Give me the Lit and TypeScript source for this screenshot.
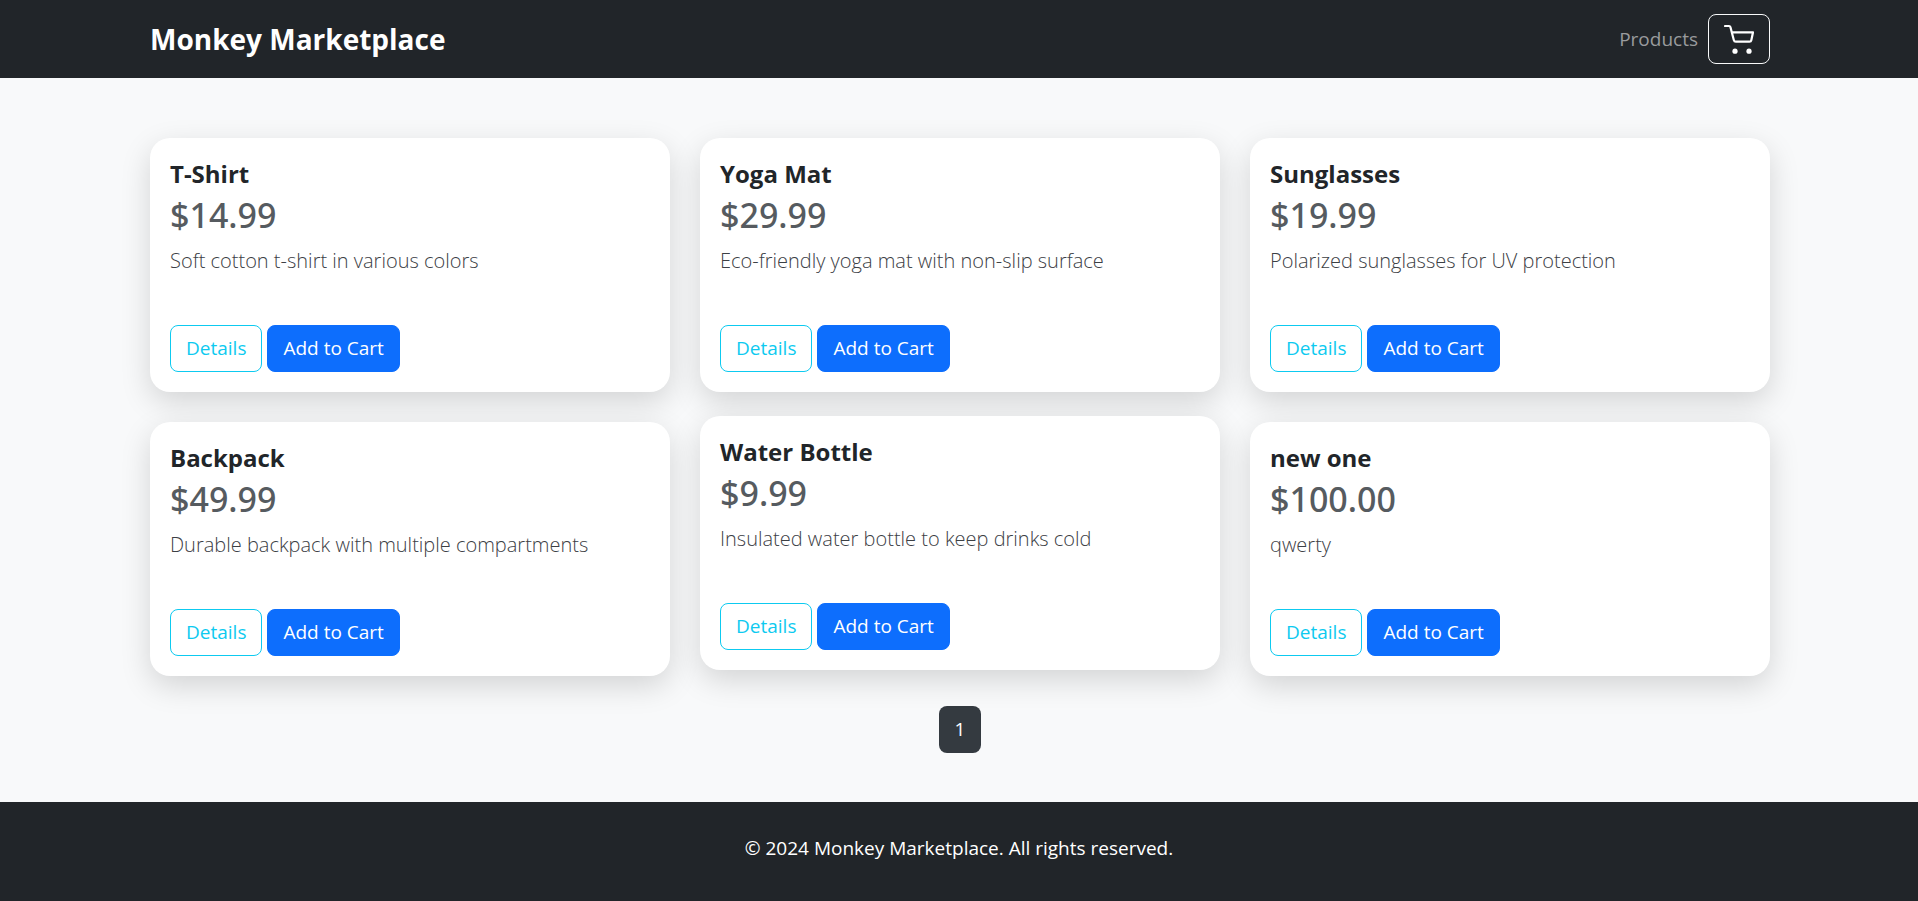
import { LitElement, html, css } from "lit";
import { customElement, property, state } from "lit/decorators.js";
import { classMap } from "lit/directives/class-map.js";

interface Product {
  name: string;
  price: number;
  description: string;
}

const PRODUCTS: Product[] = [
  { name: "T-Shirt", price: 14.99, description: "Soft cotton t-shirt in various colors" },
  { name: "Yoga Mat", price: 29.99, description: "Eco-friendly yoga mat with non-slip surface" },
  { name: "Sunglasses", price: 19.99, description: "Polarized sunglasses for UV protection" },
  { name: "Backpack", price: 49.99, description: "Durable backpack with multiple compartments" },
  { name: "Water Bottle", price: 9.99, description: "Insulated water bottle to keep drinks cold" },
  { name: "new one", price: 100, description: "qwerty" },
];

@customElement("product-card")
export class ProductCard extends LitElement {
  @property({ attribute: false }) product!: Product;
  @property({ type: Boolean }) raised = false;

  static styles = css`
    :host {
      display: block;
    }
    .card {
      box-sizing: border-box;
      height: 100%;
      display: flex;
      flex-direction: column;
      padding: 20px;
      border-radius: 20px;
      background: #fff;
      box-shadow: 0 10px 30px rgba(0, 0, 0, 0.15);
      transition: transform 0.2s;
    }
    .card.raised,
    .card:hover {
      transform: translateY(-6px);
    }
    .name {
      margin: 0 0 4px;
      font-size: 24px;
      line-height: 32px;
      font-weight: 700;
    }
    .price {
      margin: 0 0 10px;
      font-family: "Segoe UI", "Noto Sans", "Open Sans", sans-serif;
      font-size: 34px;
      line-height: 42px;
      font-weight: 500;
      color: #565b60;
    }
    .description {
      margin: 0 0 49px;
      font-size: 20px;
      line-height: 30px;
      font-weight: 300;
      color: #3c4045;
    }
    .actions {
      display: flex;
      gap: 5px;
      margin-top: auto;
    }
    .button {
      padding: 8px 15px;
      border: 1px solid #0d6efd;
      border-radius: 8px;
      font: inherit;
      font-size: 19px;
      line-height: 29px;
      color: #fff;
      background: #0d6efd;
      cursor: pointer;
    }
    .button.outline {
      color: #0dcaf0;
      border-color: #0dcaf0;
      background: transparent;
    }
  `;

  render() {
    const { name, price, description } = this.product;
    return html`
      <article class=${classMap({ card: true, raised: this.raised })}>
        <h2 class="name">${name}</h2>
        <p class="price">$${price.toFixed(2)}</p>
        <p class="description">${description}</p>
        <div class="actions">
          <button class="button outline" type="button">Details</button>
          <button class="button" type="button">Add to Cart</button>
        </div>
      </article>
    `;
  }
}

@customElement("app-root")
export class AppRoot extends LitElement {
  @state() private highlighted = "Water Bottle";

  static styles = css`
    :host {
      display: flex;
      flex-direction: column;
      min-height: 100vh;
      font-family: "Segoe UI", "Open Sans", "Noto Sans", sans-serif;
      font-size: 19px;
      line-height: 30px;
      color: #212529;
      background: #f8f9fa;
    }
    .container {
      box-sizing: border-box;
      width: 100%;
      max-width: 1650px;
      margin: 0 auto;
      padding: 0 14px 0 16px;
    }
    .header {
      padding: 14px 0;
      background: #212529;
    }
    .bar {
      display: flex;
      align-items: center;
      justify-content: space-between;
    }
    .brand {
      font-size: 28px;
      font-weight: 700;
      color: #fff;
      text-decoration: none;
    }
    .nav {
      display: flex;
      align-items: center;
      gap: 10px;
    }
    .link {
      color: #999b9d;
      text-decoration: none;
    }
    .cart {
      display: flex;
      padding: 9px 15px;
      border: 1px solid #f8f9fa;
      border-radius: 8px;
      color: #fff;
      background: transparent;
      cursor: pointer;
    }
    .main {
      flex: 1;
      padding: 60px 0 49px;
    }
    .grid {
      display: grid;
      grid-template-columns: repeat(3, minmax(0, 1fr));
      gap: 30px;
    }
    .pages {
      display: flex;
      justify-content: center;
      margin-top: 30px;
    }
    .page {
      padding: 8px 16px;
      border: 0;
      border-radius: 8px;
      font: inherit;
      line-height: 31px;
      color: #fff;
      background: #343a40;
      cursor: pointer;
    }
    .footer {
      padding: 31px 0 38px;
      color: #fff;
      background: #212529;
      text-align: center;
    }
    .legal {
      margin: 0;
    }
    @media (max-width: 1100px) {
      .grid {
        grid-template-columns: repeat(2, minmax(0, 1fr));
      }
    }
    @media (max-width: 700px) {
      .grid {
        grid-template-columns: minmax(0, 1fr);
      }
    }
  `;

  render() {
    return html`
      <header class="header">
        <div class="container bar">
          <a class="brand" href="#">Monkey Marketplace</a>
          <nav class="nav">
            <a class="link" href="#products">Products</a>
            <button class="cart" type="button" aria-label="Cart">
              <svg width="30" height="30" viewBox="0 0 30 30" fill="none" aria-hidden="true">
                <path
                  d="M1 2h4c.8 0 1.200.3 1.400 1l3.400 13c.3 1.200.9 1.700 2 1.700h13.700c1 0 1.600-.5 1.800-1.500L29 8.300H8"
                  stroke="currentColor"
                  stroke-width="2.2"
                  stroke-linecap="round"
                  stroke-linejoin="round"
                />
                <circle cx="11" cy="27.200" r="2.600" fill="currentColor" />
                <circle cx="25" cy="27.200" r="2.600" fill="currentColor" />
              </svg>
            </button>
          </nav>
        </div>
      </header>
      <main class="main">
        <div class="container">
          <div class="grid">
            ${PRODUCTS.map(
              (p) => html`<product-card .product=${p} ?raised=${p.name === this.highlighted}></product-card>`
            )}
          </div>
          <nav class="pages" aria-label="Pages">
            <button class="page" type="button" aria-current="page">1</button>
          </nav>
        </div>
      </main>
      <footer class="footer">
        <p class="legal">© 2024 Monkey Marketplace. All rights reserved.</p>
      </footer>
    `;
  }
}
